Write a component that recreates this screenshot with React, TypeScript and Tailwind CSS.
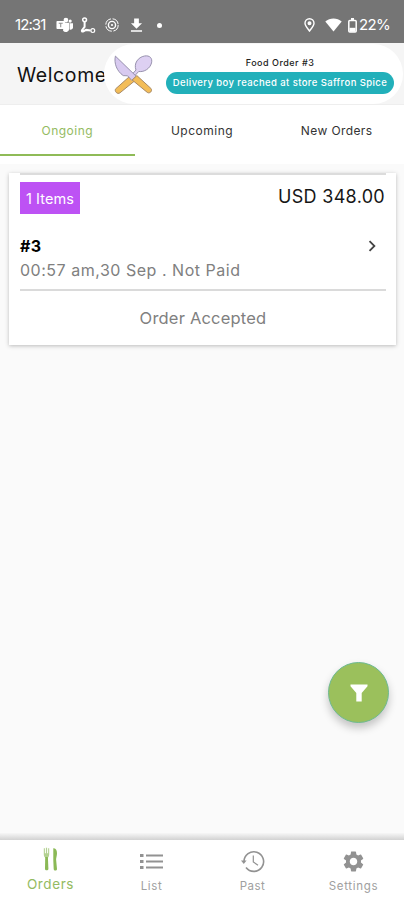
import { useState } from "react";
import { MdChevronRight, MdDownload, MdSettings } from "react-icons/md";

const tabs = [
  { name: "Ongoing", style: "tracking-[0.5px]" },
  { name: "Upcoming", style: "tracking-[0.5px]" },
  { name: "New Orders", style: "tracking-[0.4px]" },
];

function TeamsIcon() {
  return (
    <svg width="17" height="16" viewBox="0 0 18 16" fill="white">
      <circle cx="10.5" cy="2.8" r="2.5" />
      <circle cx="15" cy="3.8" r="1.7" />
      <path d="M8 5.5h6V12a3.7 3.7 0 0 1-6.5 2.2z" />
      <path d="M14.5 6.2H18v4.2c0 1.8-1.4 2.8-3.5 2.6z" />
      <rect x="0.5" y="3.7" width="9" height="8.6" rx="0.8" />
      <path d="M2.9 6.2h4.2M5 6.2v4.2" stroke="#8f8f8f" strokeWidth="1.1" />
    </svg>
  );
}

function RouteIcon() {
  return (
    <svg width="16" height="17" viewBox="0 0 16 17" fill="none" stroke="white">
      <circle cx="4.6" cy="2.8" r="1.9" strokeWidth="1.5" />
      <path d="M4.6 4.7v5.1L2 13.2c-.4 1 .1 1.5 1 1.3l3.2-1.6 4.4.6" strokeWidth="2" />
      <circle cx="12.8" cy="13.6" r="1.9" strokeWidth="1.2" />
    </svg>
  );
}

function TargetIcon() {
  return (
    <svg width="14" height="14" viewBox="0 0 14 14" fill="none" stroke="white">
      <circle cx="7" cy="7" r="6.2" strokeWidth="1" strokeDasharray="8 1.7" />
      <circle cx="7" cy="7" r="3.6" strokeWidth="1.4" />
      <circle cx="7" cy="7" r="1.1" fill="white" stroke="none" />
    </svg>
  );
}

function CutleryIcon() {
  return (
    <svg width="40" height="41" viewBox="0 0 40 41" strokeLinejoin="round" strokeWidth="1">
      <path
        d="M16.5 22.5 21.5 27 7 38.8c-2.6 2-6-1.6-4.3-4z"
        fill="#f3bd58"
        stroke="#a88a67"
      />
      <path
        d="M18 21.5 23 16C20.5 9.5 25 3.2 31.5 2c5.2-.9 8.2 2.2 7 6.9-1.4 5.6-7.2 9.4-12.8 8.6L20 23.6z"
        fill="#ddd0f2"
        stroke="#9892ae"
      />
      <path
        d="M2.4 2.1C.8 9.4 3.8 17 10.2 21.6l4.4.2 4.3 4.7 4.3-4.2z"
        fill="#d8caf0"
        stroke="#9892ae"
      />
      <path
        d="m19.2 26 4.7-4.4 14 12.8c2 2.4-1.2 5.7-3.6 4z"
        fill="#f3bd58"
        stroke="#a88a67"
      />
    </svg>
  );
}

function ForkKnifeIcon() {
  return (
    <svg width="16" height="24" viewBox="0 0 16 24" fill="#8bb956">
      <path
        d="M.8 1.2h1.1v5h1v-5.5h1.2v5.5h1V1.2h1.1v6.3c0 1.6-.7 2.6-1.4 3.2H2.2C1.4 10 .8 9 .8 7.5z"
        opacity="0.65"
      />
      <path d="M2.2 10h2.7l.5 12c0 1.7-3.4 1.7-3.4 0z" />
      <path d="M10.3 1.2c2.4-.5 3.7 1.8 3.7 5 0 2.5-.9 4.5-.9 6.3l.9 9.5c0 2-3.3 2-3.3 0l-.4-8.5z" />
    </svg>
  );
}

function ListIcon() {
  return (
    <svg width="23" height="17" viewBox="0 0 23 17" fill="none" stroke="#929292">
      <path d="M0 2.5h3.5M0 8.5h3.5M0 14.5h3.5" strokeWidth="3" />
      <path d="M6 2.5h17M6 8.5h17M6 14.5h17" strokeWidth="1.8" />
    </svg>
  );
}

function PastIcon() {
  return (
    <svg width="24" height="23" viewBox="0 0 24 23" fill="none" stroke="#929292">
      <path d="M3 11.5a9.8 9.8 0 1 1 2 6" strokeWidth="1.6" />
      <path d="M0 10.5h5.6L2.8 14z" fill="#929292" stroke="none" />
      <path d="M12.3 5.5v6.5l4.7 3.2" strokeWidth="1.2" />
    </svg>
  );
}

function StatusBar() {
  return (
    <div className="flex h-[43px] shrink-0 items-center bg-[#757575] pt-[7px] pr-[15px] pl-[15px] text-white">
      <span className="w-[41px] text-[15px] tracking-[-0.9px]">12:31</span>
      <TeamsIcon />
      <span className="ml-[7px]">
        <RouteIcon />
      </span>
      <span className="ml-[9px]">
        <TargetIcon />
      </span>
      <MdDownload className="ml-[8px] size-[19px]" />
      <span className="ml-[11px] size-[5px] rounded-full bg-white" />
      <div className="ml-auto flex items-center">
        <svg width="11" height="14" viewBox="0 0 11 14" fill="none" stroke="white" strokeWidth="1.4">
          <path d="M5.5 13C3 9.6 1 7.5 1 5.2a4.5 4.5 0 0 1 9 0C10 7.5 8 9.6 5.5 13z" />
          <circle cx="5.5" cy="5.2" r="1.3" fill="white" />
        </svg>
        <svg className="ml-[10px]" width="17" height="14" viewBox="0 0 17 14" fill="white">
          <path d="M0.3 3.6C4.8-.4 12.2-.4 16.7 3.6L8.5 13.5z" />
        </svg>
        <svg className="ml-[6px]" width="9" height="15" viewBox="0 0 9 15" fill="none" stroke="white">
          <path d="M3 1h3" strokeWidth="2" />
          <rect x="0.8" y="2.5" width="7.4" height="11.5" rx="1" strokeWidth="1.5" />
          <path d="M1.5 11.8h6" strokeWidth="4" />
        </svg>
        <span className="ml-[2px] w-[30px] text-[15px] tracking-[-0.6px]">22%</span>
      </div>
    </div>
  );
}

function Notification() {
  return (
    <div className="absolute top-[44px] left-[104px] flex h-[60px] w-[299px] items-center rounded-full bg-white pr-[9px] pl-[9px]">
      <CutleryIcon />
      <div className="ml-auto flex w-[228px] flex-col items-center pt-[1px]">
        <span className="text-[9px] leading-[14px] font-medium tracking-[0.5px] whitespace-nowrap text-[#222]">
          Food Order #3
        </span>
        <div className="mt-[2px] flex h-[22px] w-full items-center justify-center rounded-full bg-[#22b0ba] pt-[1px] text-[9.5px] font-medium tracking-[0.4px] whitespace-nowrap text-white">
          Delivery boy reached at store Saffron Spice
        </div>
      </div>
    </div>
  );
}

function OrderCard() {
  return (
    <div className="mr-[8px] ml-[9px] mt-[9px] flex h-[172px] flex-col bg-white pr-[10px] pl-[11px] shadow-[0_1px_4px_rgba(0,0,0,0.25)]">
      <div className="h-[2px] shrink-0 bg-[#dcdcdc]" />
      <div className="mt-[7px] flex justify-between">
        <span className="flex h-[32px] w-[60px] items-center justify-center bg-[#bd52f4] pt-[1px] text-[14.5px] tracking-[0.1px] whitespace-nowrap text-white">
          1 Items
        </span>
        <span className="mr-[1px] text-[18px] leading-[29px] tracking-[0.3px] text-[#161616]">
          USD 348.00
        </span>
      </div>
      <div className="mt-[21px] flex items-center justify-between text-[16px] leading-[22px] font-bold tracking-[0.4px] text-black">
        #3
        <MdChevronRight className="mr-[3px] size-[22px] text-[#444]" />
      </div>
      <div className="mt-[1px] text-[16px] leading-[24px] tracking-[0.52px] whitespace-nowrap text-[#808080]">
        00:57 am,30 Sep . Not Paid
      </div>
      <div className="mt-[7px] h-[2px] shrink-0 bg-[#dadada]" />
      <div className="mt-[15px] text-center text-[16.5px] leading-[24px] tracking-[0.2px] text-[#808080]">
        Order Accepted
      </div>
    </div>
  );
}

export default function App() {
  const [active, setActive] = useState("Ongoing");

  return (
    <div className="relative flex h-[900px] w-[404px] flex-col overflow-hidden bg-[#fafafa] font-[Inter,sans-serif]">
      <StatusBar />
      <div className="flex h-[62px] shrink-0 items-center border-b border-[#eeeeee] bg-[#f5f5f5] pt-[5px] pl-[17px] text-[19.5px] tracking-[0.6px] text-[#111]">
        Welcome
      </div>
      <Notification />

      <div className="flex h-[59px] shrink-0 bg-white">
        {tabs.map((tab) => (
          <button
            key={tab.name}
            onClick={() => setActive(tab.name)}
            className={`h-[51px] flex-1 border-b-2 pt-[2px] text-[12px] ${tab.style} ${
              active === tab.name
                ? "border-[#8fbb57] text-[#94bb62]"
                : "border-transparent text-[#333]"
            }`}
          >
            {tab.name}
          </button>
        ))}
      </div>

      <OrderCard />

      <button className="absolute top-[662px] left-[328px] flex size-[61px] items-center justify-center rounded-full border border-[#6dba91] bg-[#9bc05c] shadow-[0_5px_9px_rgba(0,0,0,0.22)]">
        <svg width="18" height="18" viewBox="0 0 18 18" fill="white">
          <path d="M0.5 0.5h17v1.8L11.7 9v8.5H6.3V9L0.5 2.3z" />
        </svg>
      </button>

      <div className="mt-auto h-[7px] shrink-0 bg-linear-to-b from-[#f7f7f7] to-[#d2d2d2]" />
      <div className="grid h-[60px] shrink-0 grid-cols-4 bg-white text-[11.5px] text-[#a0a0a0]">
        <div className="flex flex-col items-center pt-[7px] text-[13.5px] text-[#94bb62]">
          <ForkKnifeIcon />
          <span className="mt-[4px] leading-[18px] tracking-[0.6px]">Orders</span>
        </div>
        <div className="flex flex-col items-center pt-[13px]">
          <ListIcon />
          <span className="mt-[7px] leading-[18px] tracking-[0.6px]">List</span>
        </div>
        <div className="flex flex-col items-center pt-[10px]">
          <PastIcon />
          <span className="mt-[4px] leading-[18px] tracking-[0.5px]">Past</span>
        </div>
        <div className="flex flex-col items-center pt-[9px]">
          <MdSettings className="size-[25px] text-[#929292]" />
          <span className="mt-[3px] leading-[18px] tracking-[0.7px]">Settings</span>
        </div>
      </div>
    </div>
  );
}
